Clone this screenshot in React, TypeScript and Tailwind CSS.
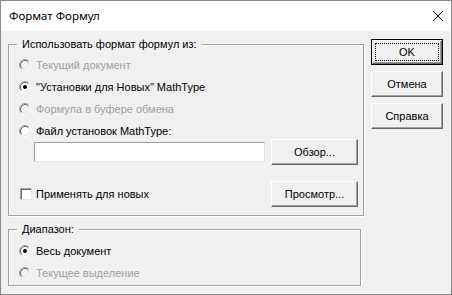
import React from 'react';

const font = { fontFamily: '"Liberation Sans", Arial, sans-serif' };

const Radio: React.FC<{ checked?: boolean; disabled?: boolean }> = ({ checked, disabled }) => (
  <svg width="12" height="12" viewBox="0 0 12 12" className="shrink-0">
    <circle cx="6" cy="6" r="5" fill={disabled ? '#f0f0f0' : '#ffffff'} />
    <path d="M2.11 9.89 A5.5 5.5 0 0 1 9.89 2.11" fill="none" stroke="#a0a0a0" strokeWidth="1" />
    <path d="M9.89 2.11 A5.5 5.5 0 0 1 2.11 9.89" fill="none" stroke="#ffffff" strokeWidth="1" />
    <path d="M2.82 9.18 A4.5 4.5 0 0 1 9.18 2.82" fill="none" stroke="#696969" strokeWidth="1" />
    <path d="M9.18 2.82 A4.5 4.5 0 0 1 2.82 9.18" fill="none" stroke="#e3e3e3" strokeWidth="1" />
    {checked && <circle cx="6" cy="6" r="2" fill="#000000" />}
  </svg>
);

const RadioRow: React.FC<{ label: string; checked?: boolean; disabled?: boolean }> = ({ label, checked, disabled }) => (
  <div className="flex items-center h-[22px] gap-[5px]">
    <Radio checked={checked} disabled={disabled} />
    <span className={disabled ? 'text-[#a0a0a0]' : 'text-black'}>{label}</span>
  </div>
);

const Button: React.FC<{ label: string; width: string; isDefault?: boolean }> = ({ label, width, isDefault }) => {
  if (isDefault) {
    return (
      <button className={`${width} h-[26px] border border-black bg-[#f0f0f0] p-0`}>
        <div className="h-full w-full border-t border-l border-white border-r border-b border-r-[#696969] border-b-[#696969] shadow-[inset_-1px_-1px_0_#a0a0a0] p-[2px]">
          <div className="h-full w-full border border-dotted border-black flex items-center justify-center">
            {label}
          </div>
        </div>
      </button>
    );
  }
  return (
    <button
      className={`${width} h-[26px] bg-[#f0f0f0] border-t border-l border-white border-r border-b border-r-[#696969] border-b-[#696969] shadow-[inset_-1px_-1px_0_#a0a0a0] flex items-center justify-center`}
    >
      {label}
    </button>
  );
};

export default function App() {
  return (
    <div className="w-[452px] h-[295px] bg-[#f0f0f0] border border-[#8a8a8a] flex flex-col text-[11px] text-black" style={font}>
      <div className="h-[30px] bg-white flex items-center justify-between pl-[8px] pr-[6px]">
        <span className="text-[11.5px]" style={{ fontFamily: '"Noto Sans", "Open Sans", sans-serif' }}>Формат Формул</span>
        <svg width="12" height="12" viewBox="0 0 12 12" className="mr-[1px]">
          <path d="M1 1 L11 11 M11 1 L1 11" stroke="#000" strokeWidth="1" />
        </svg>
      </div>

      <div className="flex pl-[7px] pt-[6px] gap-[7px]">
        <div className="flex flex-col">
          <fieldset className="w-[356px] border border-[#a0a0a0] shadow-[inset_1px_1px_0_#fff,1px_1px_0_#fff] pl-[10px] pr-[5px] pb-[8px]">
            <legend className="-ml-[2px] px-[5px] leading-[14px]">Использовать формат формул из:</legend>
            <div className="pt-[3px]">
              <RadioRow label="Текущий документ" disabled />
              <RadioRow label={'"Установки для Новых" MathType'} checked />
              <RadioRow label="Формула в буфере обмена" disabled />
              <RadioRow label="Файл установок MathType:" />
            </div>
            <div className="flex items-center h-[26px] -mt-[3px]">
              <input
                className="ml-[15px] w-[231px] h-[20px] bg-white border-t border-l border-[#a0a0a0] border-r border-b border-r-[#e3e3e3] border-b-[#e3e3e3] outline-none"
                readOnly
              />
              <div className="ml-[6px]">
                <Button label="Обзор..." width="w-[87px]" />
              </div>
            </div>
            <div className="flex items-center justify-between h-[26px] mt-[16px]">
              <div className="flex items-center gap-[4px] ml-[1px]">
                <span className="w-[12px] h-[12px] bg-white border-t border-l border-[#a0a0a0] border-r border-b border-r-[#e3e3e3] border-b-[#e3e3e3] shadow-[inset_1px_1px_0_#696969]" />
                <span>Применять для новых</span>
              </div>
              <Button label="Просмотр..." width="w-[87px]" />
            </div>
          </fieldset>

          <fieldset className="w-[353px] mt-[6px] border border-[#a0a0a0] shadow-[inset_1px_1px_0_#fff,1px_1px_0_#fff] pl-[10px] pt-[4px] pb-[1px]">
            <legend className="-ml-[2px] px-[5px] leading-[14px]">Диапазон:</legend>
            <RadioRow label="Весь документ" checked />
            <RadioRow label="Текущее выделение" disabled />
          </fieldset>
        </div>

        <div className="flex flex-col w-[72px] pt-[2px] gap-[6px]">
          <Button label="OK" width="w-[72px]" isDefault />
          <Button label="Отмена" width="w-[72px]" />
          <Button label="Справка" width="w-[72px]" />
        </div>
      </div>
    </div>
  );
}
